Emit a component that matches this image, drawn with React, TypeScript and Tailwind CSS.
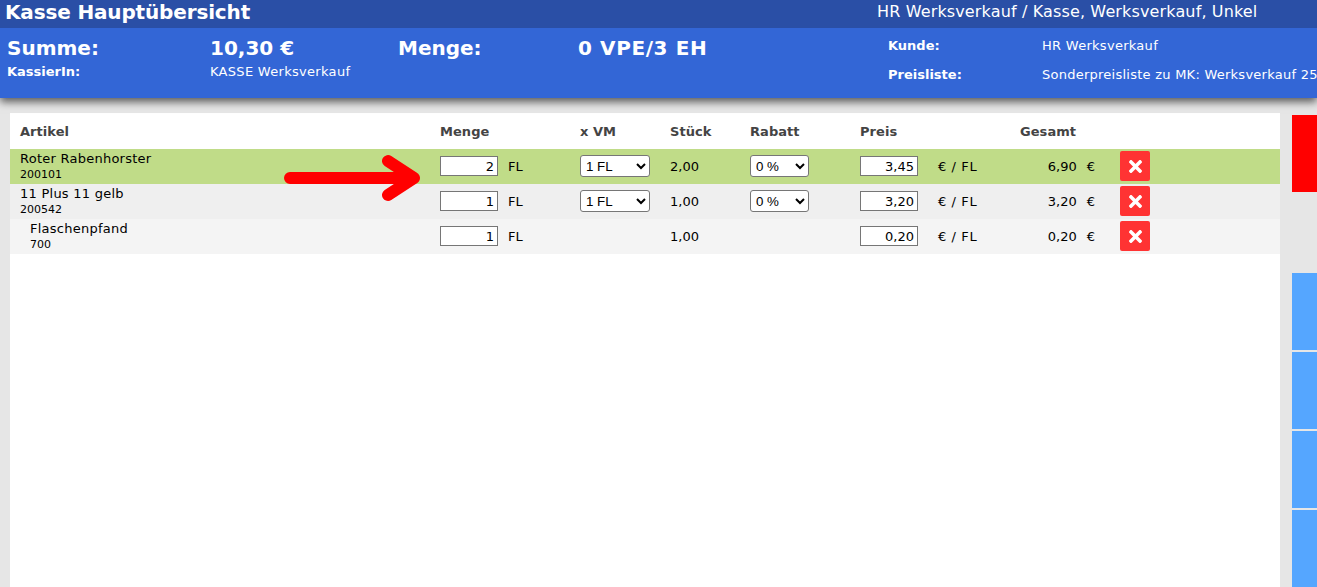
import { FaTimes } from 'react-icons/fa';

type Row = {
  name: string;
  nr: string;
  menge: string;
  vm?: boolean;
  stueck: string;
  preis: string;
  gesamt: string;
  bg: string;
  indent?: boolean;
};

const rows: Row[] = [
  { name: 'Roter Rabenhorster', nr: '200101', menge: '2', vm: true, stueck: '2,00', preis: '3,45', gesamt: '6,90', bg: 'bg-[#c0dc88]' },
  { name: '11 Plus 11 gelb', nr: '200542', menge: '1', vm: true, stueck: '1,00', preis: '3,20', gesamt: '3,20', bg: 'bg-[#efefef]' },
  { name: 'Flaschenpfand', nr: '700', menge: '1', stueck: '1,00', preis: '0,20', gesamt: '0,20', bg: 'bg-[#f4f4f4]', indent: true },
];

const gridCols = 'grid grid-cols-[430px_140px_90px_80px_110px_160px_100px_1fr]';

function NativeSelect({ value, width }: { value: string; width: string }) {
  return (
    <select
      defaultValue={value}
      className={`${width} block h-[22px] pl-[1px] bg-white border border-[#767676] rounded-[3px] text-[13.33px] text-black font-['Liberation_Sans',sans-serif]`}
    >
      <option>{value}</option>
    </select>
  );
}

function NumberInput({ value }: { value: string }) {
  return (
    <input
      type="text"
      defaultValue={value}
      className="block w-[58px] h-[20px] px-[3px] bg-white border border-[#767676] text-right text-[13px] text-black"
    />
  );
}

export default function App() {
  return (
    <div className="relative w-[1317px] h-[587px] overflow-hidden bg-[#e6e6e6] text-black font-['DejaVu_Sans',sans-serif]">
      {/* Kopf */}
      <header className="relative z-10 shadow-[0_4px_8px_rgba(0,0,0,0.6)]">
        <div className="flex h-[28px] items-center justify-between bg-[#2a4fa6] pb-[5px] pl-[5px] text-white">
          <h1 className="text-[20px] font-bold leading-none tracking-[-0.15px]">Kasse Hauptübersicht</h1>
          <span className="w-[440px] text-[16px] leading-none tracking-[0.14px]">HR Werksverkauf / Kasse, Werksverkauf, Unkel</span>
        </div>
        <div className="flex h-[70px] bg-[#3366d6] text-white">
          <div className="w-[888px] shrink-0 pl-[7px] pt-[8px]">
            <div className="grid grid-cols-[203px_188px_180px_1fr] text-[20px] font-bold leading-[24px]">
              <span>Summe:</span>
              <span>10,30 €</span>
              <span>Menge:</span>
              <span className="tracking-[0.6px]">0 VPE/3 EH</span>
            </div>
            <div className="mt-[4px] grid grid-cols-[203px_1fr] text-[13px] leading-[16px]">
              <span className="font-bold">KassierIn:</span>
              <span className="tracking-[0.3px]">KASSE Werksverkauf</span>
            </div>
          </div>
          <div className="min-w-0 flex-1 overflow-hidden whitespace-nowrap pt-[10px] text-[13px] leading-[16px]">
            <div className="grid grid-cols-[154px_1fr]">
              <span className="font-bold">Kunde:</span>
              <span className="tracking-[0.28px]">HR Werksverkauf</span>
            </div>
            <div className="mt-[13px] grid grid-cols-[154px_1fr]">
              <span className="font-bold">Preisliste:</span>
              <span className="tracking-[0.25px]">Sonderpreisliste zu MK: Werksverkauf 25</span>
            </div>
          </div>
        </div>
      </header>

      <div className="flex pt-[15px]">
        {/* Artikelliste */}
        <main className="relative ml-[10px] h-[474px] w-[1270px] bg-white text-[13px]">
          <div className={`${gridCols} h-[36px] items-center pt-[2px] font-bold tracking-[0.05px] text-[#444444]`}>
            <span className="pl-[10px]">Artikel</span>
            <span>Menge</span>
            <span>x VM</span>
            <span>Stück</span>
            <span>Rabatt</span>
            <span>Preis</span>
            <span>Gesamt</span>
          </div>
          {rows.map((row) => (
            <div key={row.nr} className={`${gridCols} h-[35px] items-center ${row.bg}`}>
              <div className={`self-start pt-[2px] ${row.indent ? 'pl-[20px]' : 'pl-[10px]'}`}>
                <div className="leading-[16px] tracking-[0.25px]">{row.name}</div>
                <div className="mt-[1px] text-[11px] leading-[14px]">{row.nr}</div>
              </div>
              <div className="flex items-center self-start pt-[7px]">
                <NumberInput value={row.menge} />
                <span className="ml-[10px] mt-[1px]">FL</span>
              </div>
              <div className="self-start pt-[6px]">{row.vm && <NativeSelect value="1 FL" width="w-[70px]" />}</div>
              <div>{row.stueck}</div>
              <div className="self-start pt-[6px]">{row.vm && <NativeSelect value="0 %" width="w-[59px]" />}</div>
              <div className="flex items-center self-start pt-[7px]">
                <NumberInput value={row.preis} />
                <span className="ml-[20px] mt-[1px] tracking-[0.6px]">€ / FL</span>
              </div>
              <div className="flex justify-end gap-[10px] pr-[25px]">
                <span>{row.gesamt}</span>
                <span>€</span>
              </div>
              <div className="self-start pt-[2px]">
                <button className="flex h-[30px] w-[30px] items-center justify-center rounded-[2px] bg-[#ff3333] text-white">
                  <FaTimes className="h-[19px] w-[19px]" />
                </button>
              </div>
            </div>
          ))}

          {/* Pfeil */}
          <svg className="absolute left-[270px] top-[40px]" width="150" height="55" viewBox="0 0 150 55" fill="none">
            <path d="M10 25 H134 M108 8 L134 25 L108 42" stroke="#ff0000" strokeWidth="12" strokeLinecap="round" strokeLinejoin="round" />
          </svg>
        </main>

        {/* Seitenleiste */}
        <aside className="ml-[12px] flex w-[25px] flex-col pt-[2px]">
          <div className="h-[77px] bg-[#ff0000]" />
          <div className="mt-[81px] flex flex-col gap-[2px]">
            <div className="h-[77px] bg-[#55a6ff]" />
            <div className="h-[77px] bg-[#55a6ff]" />
            <div className="h-[77px] bg-[#55a6ff]" />
            <div className="h-[77px] bg-[#55a6ff]" />
          </div>
        </aside>
      </div>
    </div>
  );
}
